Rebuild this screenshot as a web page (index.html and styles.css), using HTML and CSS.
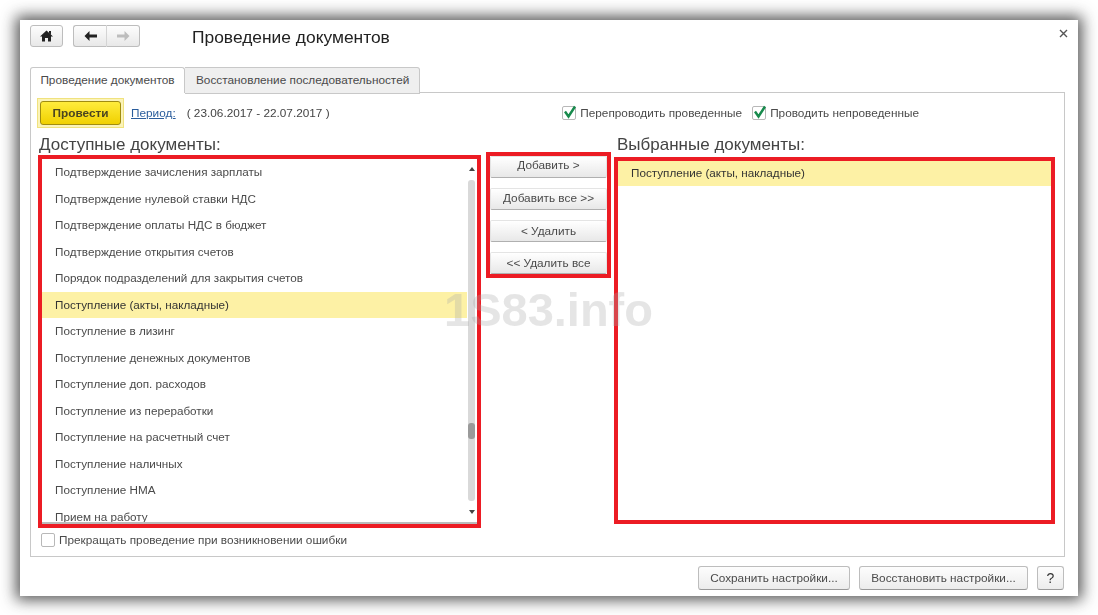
FILE: index.html
```html
<!DOCTYPE html>
<html lang="ru">
<head>
  <meta charset="UTF-8" />
  <title>Проведение документов</title>
  <link rel="stylesheet" href="styles.css">
</head>
<body>

  <div class="window">

    <!-- Header -->
    <div class="header">
      <button class="tool-btn home-btn">
        <svg width="13" height="12" viewBox="0 0 13 12"><path d="M6.5 .5 L13 6.5 H11 V11.5 H8 V8 H5 V11.5 H2 V6.5 H0 Z M9 1 H11 V4.5 L9 2.7 Z" fill="#222"/></svg>
      </button>
      <div class="nav-group">
        <button class="tool-btn nav-btn">
          <svg width="13" height="10" viewBox="0 0 13 10"><path d="M5.5 0 L.5 5 L5.5 10 V6.6 H13 V3.4 H5.5 Z" fill="#222"/></svg>
        </button>
        <button class="tool-btn nav-btn">
          <svg width="13" height="10" viewBox="0 0 13 10"><path d="M7.5 0 L12.5 5 L7.5 10 V6.6 H0 V3.4 H7.5 Z" fill="#bdbdbd"/></svg>
        </button>
      </div>
      <h1 class="title">Проведение документов</h1>
      <svg class="close" width="9" height="9" viewBox="0 0 9 9"><path d="M1 1 L8 8 M8 1 L1 8" stroke="#555" stroke-width="1.4"/></svg>
    </div>

    <!-- Tabs -->
    <div class="tabs">
      <div class="tab active">Проведение документов</div>
      <div class="tab">Восстановление последовательностей</div>
    </div>

    <div class="panel">
      <div class="toolbar">
        <div class="post-wrap"><button class="post-btn">Провести</button></div>
        <a class="period-link">Период:</a>
        <span class="period">( 23.06.2017 - 22.07.2017 )</span>
        <div class="options">
          <label class="check-row">
            <span class="box">
              <svg width="15" height="15" viewBox="0 0 15 15"><path d="M3 6.5 L6.5 11.5 L13 1.5" fill="none" stroke="#178a4c" stroke-width="2.4"/></svg>
            </span>
            Перепроводить проведенные
          </label>
          <label class="check-row">
            <span class="box">
              <svg width="15" height="15" viewBox="0 0 15 15"><path d="M3 6.5 L6.5 11.5 L13 1.5" fill="none" stroke="#178a4c" stroke-width="2.4"/></svg>
            </span>
            Проводить непроведенные
          </label>
        </div>
      </div>

      <div class="columns">
        <!-- Available -->
        <div class="col-left">
          <h2 class="col-title">Доступные документы:</h2>
          <div class="red-box list-box">
            <ul class="doc-list">
              <li>Подтверждение зачисления зарплаты</li>
              <li>Подтверждение нулевой ставки НДС</li>
              <li>Подтверждение оплаты НДС в бюджет</li>
              <li>Подтверждение открытия счетов</li>
              <li>Порядок подразделений для закрытия счетов</li>
              <li class="selected">Поступление (акты, накладные)</li>
              <li>Поступление в лизинг</li>
              <li>Поступление денежных документов</li>
              <li>Поступление доп. расходов</li>
              <li>Поступление из переработки</li>
              <li>Поступление на расчетный счет</li>
              <li>Поступление наличных</li>
              <li>Поступление НМА</li>
              <li>Прием на работу</li>
            </ul>
            <div class="scrollbar">
              <span class="arrow-up"></span>
              <div class="track"><div class="thumb"></div></div>
              <span class="arrow-down"></span>
            </div>
          </div>
        </div>

        <!-- Move buttons -->
        <div class="red-box col-mid">
          <button class="move-btn">Добавить &gt;</button>
          <button class="move-btn">Добавить все &gt;&gt;</button>
          <button class="move-btn">&lt; Удалить</button>
          <button class="move-btn">&lt;&lt; Удалить все</button>
        </div>

        <!-- Selected -->
        <div class="col-right">
          <h2 class="col-title">Выбранные документы:</h2>
          <div class="red-box chosen-box">
            <ul class="doc-list chosen">
              <li class="selected">Поступление (акты, накладные)</li>
            </ul>
          </div>
        </div>
      </div>

      <label class="check-row stop-row">
        <span class="box"></span>
        Прекращать проведение при возникновении ошибки
      </label>

      <div class="watermark">1S83.info</div>
    </div>

    <!-- Footer -->
    <div class="footer">
      <button class="foot-btn save">Сохранить настройки...</button>
      <button class="foot-btn restore">Восстановить настройки...</button>
      <button class="foot-btn help">?</button>
    </div>
  </div>

</body>
</html>
```

FILE: styles.css
```css
html, body {
  margin: 0;
  height: 100%;
  overflow: hidden;
}

body {
  background: #fff;
  font-family: "Liberation Sans", Arial, sans-serif;
  font-size: 11.8px;
  color: #4a4a4a;
  padding: 20px;
  box-sizing: border-box;
}

button {
  font-family: inherit;
  font-size: 11.8px;
  color: #4a4a4a;
  padding: 0;
  cursor: pointer;
}

.window {
  width: 1058px;
  height: 576px;
  background: #fff;
  box-shadow: 0 0 14px 4px rgba(30, 30, 30, 0.75);
  padding: 0 13px 0 10px;
  box-sizing: border-box;
  display: flex;
  flex-direction: column;
  filter: blur(0.35px);
}

/* Header */
.header {
  height: 47px;
  padding-top: 5px;
  box-sizing: border-box;
  display: flex;
  align-items: flex-start;
  position: relative;
}

.tool-btn {
  height: 22px;
  background: linear-gradient(#fdfdfd, #e8e8e8);
  border: 1px solid #bdbdbd;
  border-radius: 3px;
  display: flex;
  align-items: center;
  justify-content: center;
}

.home-btn {
  width: 33px;
}

.nav-group {
  display: flex;
  margin-left: 10px;
}

.nav-btn {
  width: 34px;
}

.nav-btn:first-child {
  border-right: 1px solid #d4d4d4;
  border-radius: 3px 0 0 3px;
}

.nav-btn:last-child {
  width: 33px;
  border-left: none;
  border-radius: 0 3px 3px 0;
}

.title {
  margin: 2px 0 0 52px;
  font-size: 17.4px;
  font-weight: normal;
  color: #222;
}

.close {
  position: absolute;
  right: -3px;
  top: 9px;
}

/* Tabs */
.tabs {
  display: flex;
  height: 26px;
  position: relative;
  z-index: 1;
}

.tab {
  height: 25px;
  line-height: 24px;
  padding: 0 10px 0 11px;
  background: #efefef;
  border: 1px solid #c8c8c8;
  border-left: none;
  border-radius: 0 3px 0 0;
  white-space: nowrap;
}

.tab.active {
  height: 26px;
  width: 155px;
  padding: 0;
  text-align: center;
  box-sizing: border-box;
  background: #fff;
  border-left: 1px solid #c8c8c8;
  border-bottom: none;
  border-radius: 3px 3px 0 0;
}

.panel {
  height: 465px;
  margin-top: -1px;
  border: 1px solid #c8c8c8;
  box-sizing: border-box;
  padding: 5px 7px 0 7px;
  position: relative;
}

/* Toolbar */
.toolbar {
  display: flex;
  align-items: center;
  height: 30px;
}

.post-wrap {
  margin-left: -1px;
  padding: 2px;
  border: 1px solid #f0e27e;
  background: #fbf3b8;
}

.post-btn {
  display: block;
  width: 81px;
  height: 24px;
  border: 1px solid #a08c10;
  border-radius: 3px;
  background: linear-gradient(#ffec3c, #f0d000);
  font-weight: bold;
  color: #4a4420;
}

.period-link {
  margin-left: 7px;
  color: #2a5d9c;
  text-decoration: underline;
}

.period {
  margin-left: 11px;
  color: #444;
}

.options {
  display: flex;
  margin-left: auto;
  margin-right: 138px;
  gap: 10px;
}

.check-row {
  display: flex;
  align-items: center;
  gap: 4px;
  white-space: nowrap;
}

.box {
  width: 14px;
  height: 14px;
  border: 1px solid #b8b8b8;
  border-radius: 2px;
  background: #fff;
  box-sizing: border-box;
  display: block;
  position: relative;
}

.box svg {
  position: absolute;
  left: -1px;
  top: -2px;
}

/* Columns */
.columns {
  display: flex;
  align-items: flex-start;
  margin-top: 4px;
}

.col-title {
  margin: 0;
  height: 23px;
  line-height: 26px;
  font-size: 17px;
  font-weight: normal;
  color: #444;
}

.col-left {
  width: 443px;
}

.col-left .col-title {
  margin-left: 1px;
}

.col-right {
  width: 441px;
  margin-left: 3px;
}

.col-right .col-title {
  height: 25px;
  margin-left: 3px;
}

.red-box {
  border: 4px solid #ec1c24;
  box-sizing: border-box;
}

.list-box {
  height: 373px;
  display: flex;
  box-shadow: inset 0 -2px 0 #bbb;
}

.doc-list {
  list-style: none;
  margin: 0;
  padding: 0;
  flex: 1;
  overflow: hidden;
  min-width: 0;
  height: 363px;
  font-size: 11.7px;
}

.doc-list li {
  height: 26.5px;
  line-height: 26.5px;
  padding-left: 13px;
  white-space: nowrap;
}

.doc-list li.selected {
  background: #fdf1a5;
  color: #333;
}

.chosen li {
  height: 25px;
  line-height: 23px;
  padding-left: 13px;
}

.scrollbar {
  width: 9px;
  margin-right: 1px;
  display: flex;
  flex-direction: column;
  align-items: center;
  padding-top: 8px;
  box-sizing: border-box;
}

.arrow-up, .arrow-down {
  width: 0;
  height: 0;
  border-left: 3px solid transparent;
  border-right: 3px solid transparent;
}

.arrow-up {
  border-bottom: 4px solid #444;
}

.arrow-down {
  border-top: 4px solid #444;
  margin-top: 9px;
}

.track {
  width: 7px;
  height: 321px;
  margin-top: 9px;
  background: #d9d9d9;
  border-radius: 3px;
  padding-top: 243px;
  box-sizing: border-box;
}

.thumb {
  height: 16px;
  background: #9a9a9a;
  border-radius: 3px;
}

.col-mid {
  width: 125px;
  height: 126px;
  margin: 20px 0 0 5px;
  display: flex;
  flex-direction: column;
  justify-content: space-between;
}

.move-btn {
  height: 22px;
  background: linear-gradient(#fff, #e8e8e8);
  border: 1px solid #e4e4e4;
  border-bottom: 1px solid #b0b0b0;
  border-radius: 2px;
}

.move-btn:first-child {
  padding-bottom: 4px;
}

.move-btn:nth-child(2) {
  padding-bottom: 2px;
}

.chosen-box {
  height: 367px;
}

.stop-row {
  margin: 5px 0 0 3px;
}

/* Overlay text sits on top of the lists */
.watermark {
  position: absolute;
  left: 413px;
  top: 189px;
  font-size: 47px;
  font-weight: bold;
  color: rgba(170, 170, 170, 0.3);
  pointer-events: none;
}

/* Footer */
.footer {
  display: flex;
  justify-content: flex-end;
  gap: 9px;
  margin: 9px 1px 0 0;
}

.foot-btn {
  height: 24px;
  background: linear-gradient(#fdfdfd, #ececec);
  border: 1px solid #bdbdbd;
  border-bottom-color: #999;
  border-radius: 3px;
}

.save {
  width: 152px;
}

.restore {
  width: 169px;
}

.help {
  width: 27px;
  font-size: 14px;
  color: #333;
}
```
